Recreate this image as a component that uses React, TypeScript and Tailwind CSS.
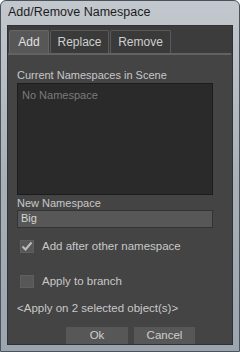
import React from 'react';

const font = { fontFamily: '"Liberation Sans", Arial, sans-serif' };

const CheckRow: React.FC<{ checked?: boolean; label: string; className?: string }> = ({ checked, label, className = '' }) => (
  <div className={`flex items-center ${className}`}>
    <div className="ml-[3px] w-[14px] h-[13px] bg-[#575757] border border-[#5f5f5f] flex items-center justify-center">
      {checked && (
        <svg width="12" height="11" viewBox="0 0 12 11">
          <path d="M1.5 5.5 L4.5 8.5 L10.5 1.5" fill="none" stroke="#bdbdbd" strokeWidth="2" />
        </svg>
      )}
    </div>
    <span className="ml-[8px] text-[11.5px] text-[#c8c8c8]">{label}</span>
  </div>
);

const App: React.FC = () => {
  const tabs = ['Add', 'Replace', 'Remove'];

  return (
    <div
      style={font}
      className="w-[240px] h-[352px] flex flex-col rounded-t-[6px] border border-[#4a525c] bg-gradient-to-b from-[#c3c8ce] via-[#a9b0b8] to-[#9ca4ad]"
    >
      <div className="h-[27px] flex items-center pl-[7px] text-[12.5px] text-[#1c1c1c]">Add/Remove Namespace</div>

      <div className="flex-1 ml-[6px] mr-[6px] mb-[6px] border border-[#2f3338] bg-[#444444] flex flex-col">
        <div className="h-[27px] bg-[#3c3c3c] flex items-end pl-[1px] gap-[1px]">
          {tabs.map((t, i) => (
            <div
              key={t}
              className={`h-[23px] flex items-center justify-center rounded-t-[2px] border border-b-0 text-[12px] ${
                i === 0
                  ? 'w-[40px] bg-[#575757] border-[#666] text-[#e0e0e0]'
                  : i === 1
                  ? 'w-[59px] bg-[#3a3a3a] border-[#5a5a5a] text-[#cfcfcf]'
                  : 'w-[61px] bg-[#3a3a3a] border-[#5a5a5a] text-[#cfcfcf]'
              }`}
            >
              {t}
            </div>
          ))}
        </div>
        <div className="h-[2px] bg-[#626262] mr-[1px]" />

        <div className="flex-1 px-[9px] flex flex-col">
          <div className="mt-[13px] h-[14px] leading-[14px] text-[11px] text-[#c8c8c8]">Current Namespaces in Scene</div>
          <div className="mt-[1px] w-[196px] h-[112px] bg-[#2a2a2a] border border-[#1c1c1c] px-[4px] pt-[3px] text-[11px] text-[#7a7a7a]">
            No Namespace
          </div>
          <div className="mt-[1px] h-[14px] leading-[14px] text-[11px] text-[#c8c8c8]">New Namespace</div>
          <div className="w-[196px] h-[18px] bg-[#575757] border border-[#333] px-[3px] flex items-center text-[11px] text-[#d4d4d4]">
            Big
          </div>
          <CheckRow checked label="Add after other namespace" className="mt-[10px]" />
          <CheckRow label="Apply to branch" className="mt-[18px]" />
          <div className="mt-[11px] h-[14px] leading-[14px] text-[11.5px] text-[#c8c8c8]">&lt;Apply on 2 selected object(s)&gt;</div>
          <div className="mt-[12px] ml-[49px] flex gap-[6px]">
            <div className="w-[62px] h-[17px] bg-[#575757] flex items-center justify-center text-[11.5px] text-[#cfcfcf]">Ok</div>
            <div className="w-[61px] h-[17px] bg-[#575757] flex items-center justify-center text-[11.5px] text-[#cfcfcf]">Cancel</div>
          </div>
        </div>
      </div>
    </div>
  );
};

export default App;
